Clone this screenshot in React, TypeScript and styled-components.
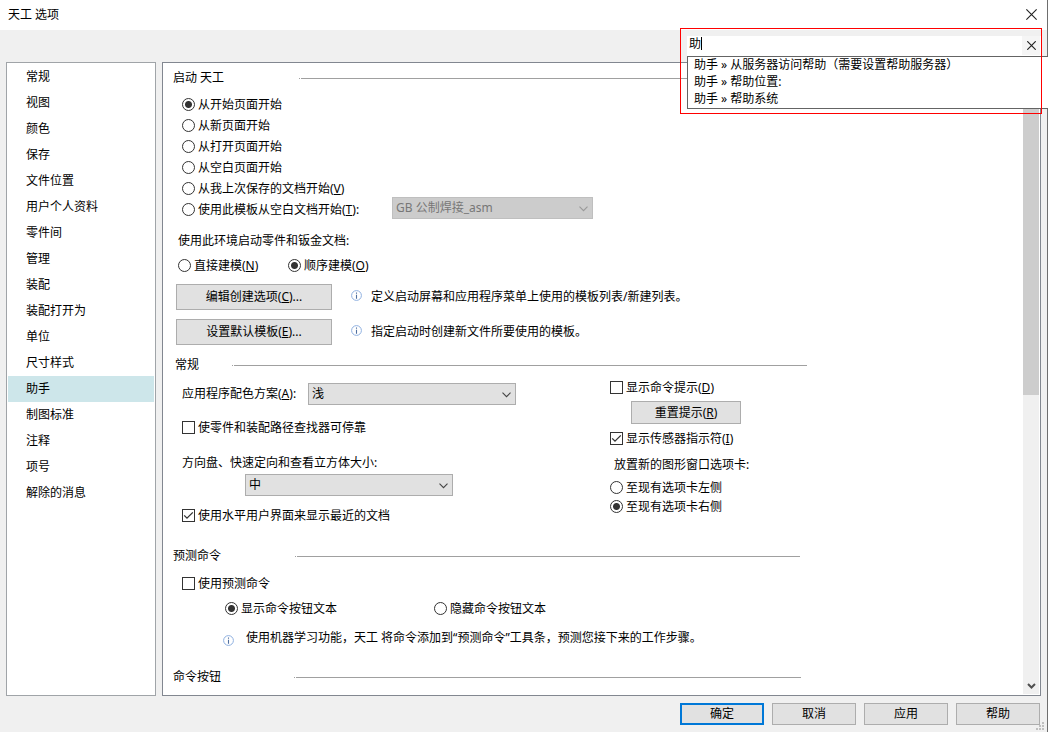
import React, { useId, useState } from "react";
import styled, { createGlobalStyle, css } from "styled-components";

const GlobalStyle = createGlobalStyle`
  * { box-sizing: border-box; }
  body {
    margin: 0;
    background: #f0f0f0;
    color: #000;
    font: 12px/20px "Noto Sans", "Noto Sans CJK SC", sans-serif;
  }
  button, input, select { font: inherit; color: inherit; }
  u { text-underline-offset: 1px; text-decoration-thickness: 1px; text-decoration-skip-ink: none; }
`;

const Window = styled.div`
  position: relative;
  display: flex;
  flex-direction: column;
  min-height: 100vh;
  border-right: 1px solid #6e6e6e;
`;

const TitleBar = styled.header`
  display: flex;
  align-items: center;
  justify-content: space-between;
  height: 30px;
  padding: 0 10px 2px 8px;
  background: #fff;
`;

const Title = styled.h1`
  margin: 0;
  padding-top: 2px;
  font-size: 12px;
  font-weight: 400;
`;

const IconButton = styled.button`
  display: flex;
  align-items: center;
  justify-content: center;
  padding: 0;
  border: 0;
  background: transparent;
`;

const SearchPopup = styled.div`
  position: absolute;
  top: 28px;
  right: 5px;
  width: 362px;
  height: 86px;
  padding: 8px 1px 0 7px;

  &::after {
    content: "";
    position: absolute;
    inset: 0;
    border: 1px solid #ff0000;
    pointer-events: none;
  }
`;

const SearchField = styled.div`
  position: relative;
  display: flex;
  height: 20px;
  padding-right: 1px;
  background: #fff;
`;

const SearchInput = styled.input`
  flex: 1;
  min-width: 0;
  height: 15px;
  padding: 0 2px;
  border: 0;
  outline: 0;
  background: transparent;
  caret-color: transparent;
  line-height: 15px;
`;

const Caret = styled.span`
  position: absolute;
  top: 1px;
  left: 14px;
  width: 1px;
  height: 13px;
  background: #000;
`;

const ClearButton = styled(IconButton)`
  width: 18px;
  height: 19px;
  background: #f5f5f5;
`;

const Suggestions = styled.ul`
  position: relative;
  display: grid;
  grid-auto-rows: 17px;
  margin: 0 -7px 0 0;
  padding: 0 6px;
  height: 53px;
  border: 1px solid #646464;
  border-right: 0;
  background: #fff;
  list-style: none;
  line-height: 15px;
`;

const Body = styled.div`
  display: flex;
  flex: 1;
  gap: 6px;
  padding: 32px 6px 0;
`;

const Sidebar = styled.nav`
  width: 150px;
  border: 1px solid #a0a4a8;
  background: #fff;
`;

const NavList = styled.ul`
  margin: 0;
  padding: 1px;
  list-style: none;
`;

const NavItem = styled.button<{ $active: boolean }>`
  display: block;
  width: 100%;
  height: 26px;
  padding: 0 18px;
  border: 0;
  background: ${(p) => (p.$active ? "#cde6ea" : "transparent")};
  text-align: left;
`;

const Panel = styled.main`
  display: flex;
  flex: 1;
  min-width: 0;
  padding-right: 1px;
  border: 1px solid #828790;
  background: #fff;
`;

const Content = styled.div`
  flex: 1;
  min-width: 0;
  padding: 5px 10px 7px;
`;

const ScrollTrack = styled.div`
  display: flex;
  flex-direction: column;
  width: 16px;
  margin-bottom: 1px;
  background: #f0f0f0;
`;

const ScrollThumb = styled.div`
  height: 315px;
  margin-bottom: auto;
  background: #cdcdcd;
`;

const ScrollButton = styled(IconButton)`
  height: 17px;
`;

const Group = styled.section<{ $top?: number; $width: number }>`
  max-width: ${(p) => p.$width}px;
  margin-top: ${(p) => p.$top ?? 0}px;
`;

const GroupHeader = styled.div<{ $label: number; $indent?: number }>`
  display: grid;
  grid-template-columns: ${(p) => p.$label}px 1fr;
  align-items: center;
  height: 20px;
  padding-left: ${(p) => p.$indent ?? 0}px;

  &::after {
    content: "";
    height: 1px;
    background: linear-gradient(to right, #a0a0a0 1px, #fff 1px 2px, #a0a0a0 2px);
  }
`;

const GroupTitle = styled.h2`
  margin: 0;
  font-size: 12px;
  font-weight: 400;
`;

const Row = styled.div<{ $top?: number; $indent?: number; $gap?: number }>`
  display: flex;
  align-items: center;
  gap: ${(p) => p.$gap ?? 0}px;
  min-height: 20px;
  margin-top: ${(p) => p.$top ?? 0}px;
  padding-left: ${(p) => p.$indent ?? 0}px;
  white-space: nowrap;
`;

const ChoiceRow = styled(Row)`
  min-height: 21px;
`;

const RadioList = styled.div<{ $row: number; $top: number; $indent?: number }>`
  display: grid;
  grid-auto-rows: ${(p) => p.$row}px;
  margin-top: ${(p) => p.$top}px;
  padding-left: ${(p) => p.$indent ?? 0}px;
`;

const TemplateRow = styled.div`
  display: flex;
  height: 25px;
  margin-top: -2px;
  padding-left: 9px;
`;

const TemplateLabel = styled.div`
  display: flex;
  align-items: center;
  width: 210px;
`;

const ChoiceLabel = styled.label`
  display: inline-flex;
  align-items: center;
  gap: 3px;
  white-space: nowrap;
`;

const choiceBox = css`
  appearance: none;
  flex: none;
  width: 13px;
  height: 13px;
  margin: 0;
  border: 1px solid #333;
  background: #fff;
`;

const RadioInput = styled.input`
  ${choiceBox}
  border-radius: 50%;
  &:checked { background: radial-gradient(circle, #333 3px, #fff 4px); }
`;

const CheckInput = styled.input`
  ${choiceBox}
`;

const CheckBoxFrame = styled.span`
  position: relative;
  display: flex;

  svg {
    position: absolute;
    inset: 0;
    pointer-events: none;
  }
`;

const PairCell = styled.div<{ $width: number }>`
  display: flex;
  width: ${(p) => p.$width}px;
`;

const PushButton = styled.button<{ $width: number; $height: number; $primary?: boolean }>`
  width: ${(p) => p.$width}px;
  height: ${(p) => p.$height}px;
  padding: 0;
  border: ${(p) => (p.$primary ? "2px solid #0078d7" : "1px solid #adadad")};
  background: #e1e1e1;
  line-height: 16px;
`;

const SelectFrame = styled.div<{ $width: number }>`
  position: relative;
  width: ${(p) => p.$width}px;
  height: 22px;

  svg {
    position: absolute;
    top: 9px;
    right: 5px;
    pointer-events: none;
  }
`;

const SelectBox = styled.select`
  appearance: none;
  width: 100%;
  height: 22px;
  padding: 0 20px 0 3px;
  border: 1px solid #adadad;
  border-radius: 0;
  background: #e1e1e1;
  line-height: 20px;

  &:disabled {
    border-color: #bfbfbf;
    background: #ccc;
    color: #777;
    opacity: 1;
  }
`;

const Columns = styled.div`
  display: grid;
  grid-template-columns: 437px 1fr;
  margin-top: 2px;
`;

const LeftColumn = styled.div`
  padding: 6px 0 0 9px;
`;

const RightColumn = styled.div``;

const ActionRow = styled(Row)`
  height: 26px;
  padding-left: 3px;
`;

const Hint = styled.div<{ $gap?: number; $lead?: number }>`
  display: flex;
  align-items: flex-start;
  gap: ${(p) => p.$gap ?? 9}px;

  svg {
    flex: none;
    margin-top: ${(p) => p.$lead ?? 3}px;
  }
`;

const Footer = styled.footer`
  display: flex;
  justify-content: flex-end;
  gap: 8px;
  padding: 7px;
`;

const Grip = styled.svg`
  position: absolute;
  right: 3px;
  bottom: 2px;
`;

const CrossIcon = ({ size, stroke = 1 }: { size: number; stroke?: number }) => (
  <svg width={size} height={size} viewBox="0 0 10 10" fill="none" stroke="#222" strokeWidth={stroke}>
    <path d="M0.3 0.3L9.7 9.7M9.7 0.3L0.3 9.7" />
  </svg>
);

const InfoIcon = () => (
  <svg width="11" height="11" viewBox="0 0 11 11" fill="none">
    <circle cx="5.5" cy="5.5" r="4.9" stroke="#8fb0e0" />
    <path d="M5.5 2.5v1.2M5.5 4.7v4" stroke="#4f6f9f" strokeWidth="1.1" />
  </svg>
);

const Radio = ({ name, checked, children }: { name: string; checked?: boolean; children: React.ReactNode }) => (
  <ChoiceLabel>
    <RadioInput type="radio" name={name} defaultChecked={checked} />
    <span>{children}</span>
  </ChoiceLabel>
);

const Check = ({ initial = false, children }: { initial?: boolean; children: React.ReactNode }) => {
  const [on, setOn] = useState(initial);
  return (
    <ChoiceLabel>
      <CheckBoxFrame>
        <CheckInput type="checkbox" checked={on} onChange={(e) => setOn(e.target.checked)} />
        {on && (
          <svg width="13" height="13" viewBox="0 0 13 13" fill="none" stroke="#333" strokeWidth="1.3">
            <path d="M2.2 6.4L5 9.2L10.8 3.4" />
          </svg>
        )}
      </CheckBoxFrame>
      <span>{children}</span>
    </ChoiceLabel>
  );
};

const Select = ({ id, width, value, label, disabled }: { id: string; width: number; value: string; label?: string; disabled?: boolean }) => (
  <SelectFrame $width={width}>
    <SelectBox id={id} aria-label={label} disabled={disabled} defaultValue={value}>
      <option>{value}</option>
    </SelectBox>
    <svg width="9" height="6" viewBox="0 0 9 6" fill="none" stroke={disabled ? "#999" : "#444"} strokeWidth="1.1">
      <path d="M0.5 0.7L4.5 4.7L8.5 0.7" />
    </svg>
  </SelectFrame>
);

const pages = [
  "常规", "视图", "颜色", "保存", "文件位置", "用户个人资料", "零件间", "管理", "装配",
  "装配打开为", "单位", "尺寸样式", "助手", "制图标准", "注释", "项号", "解除的消息",
];

const results = ["助手 » 从服务器访问帮助（需要设置帮助服务器）", "助手 » 帮助位置:", "助手 » 帮助系统"];

export default function App() {
  const [page, setPage] = useState("助手");
  const [query, setQuery] = useState("助");
  const schemeId = useId();
  const sizeId = useId();

  return (
    <>
      <GlobalStyle />
      <Window>
        <TitleBar>
          <Title>天工 选项</Title>
          <IconButton aria-label="关闭">
            <CrossIcon size={11} />
          </IconButton>
        </TitleBar>

        <Body>
          <Sidebar>
            <NavList>
              {pages.map((p) => (
                <li key={p}>
                  <NavItem $active={p === page} onClick={() => setPage(p)}>{p}</NavItem>
                </li>
              ))}
            </NavList>
          </Sidebar>

          <Panel>
            <Content>
              <Group $width={634}>
                <GroupHeader $label={126}><GroupTitle>启动 天工</GroupTitle></GroupHeader>
                <RadioList $row={21} $top={6} $indent={9}>
                  <Radio name="start" checked>从开始页面开始</Radio>
                  <Radio name="start">从新页面开始</Radio>
                  <Radio name="start">从打开页面开始</Radio>
                  <Radio name="start">从空白页面开始</Radio>
                  <Radio name="start">从我上次保存的文档开始(<u>V</u>)</Radio>
                </RadioList>
                <TemplateRow>
                  <TemplateLabel>
                    <Radio name="start">使用此模板从空白文档开始(<u>T</u>):</Radio>
                  </TemplateLabel>
                  <Select id="template" label="模板" width={201} value="GB 公制焊接_asm" disabled />
                </TemplateRow>
                <Row $top={9} $indent={5}>使用此环境启动零件和钣金文档:</Row>
                <ChoiceRow $top={4} $indent={5}>
                  <PairCell $width={110}><Radio name="env">直接建模(<u>N</u>)</Radio></PairCell>
                  <Radio name="env" checked>顺序建模(<u>O</u>)</Radio>
                </ChoiceRow>
                <ActionRow $top={8} $gap={19}>
                  <PushButton $width={156} $height={26}>编辑创建选项(<u>C</u>)...</PushButton>
                  <Hint><InfoIcon />定义启动屏幕和应用程序菜单上使用的模板列表/新建列表。</Hint>
                </ActionRow>
                <ActionRow $top={9} $gap={19}>
                  <PushButton $width={156} $height={26}>设置默认模板(<u>E</u>)...</PushButton>
                  <Hint><InfoIcon />指定启动时创建新文件所要使用的模板。</Hint>
                </ActionRow>
              </Group>

              <Group $top={10} $width={634}>
                <GroupHeader $label={57} $indent={2}><GroupTitle>常规</GroupTitle></GroupHeader>
                <Columns>
                  <LeftColumn>
                    <Row>
                      <PairCell $width={126} as="label" htmlFor={schemeId}>应用程序配色方案(<u>A</u>):</PairCell>
                      <Select id={schemeId} width={208} value="浅" />
                    </Row>
                    <ChoiceRow $top={12}><Check>使零件和装配路径查找器可停靠</Check></ChoiceRow>
                    <Row $top={15}><label htmlFor={sizeId}>方向盘、快速定向和查看立方体大小:</label></Row>
                    <Row $top={1} $indent={63}><Select id={sizeId} width={208} value="中" /></Row>
                    <ChoiceRow $top={9}><Check initial>使用水平用户界面来显示最近的文档</Check></ChoiceRow>
                  </LeftColumn>
                  <RightColumn>
                    <ChoiceRow><Check>显示命令提示(<u>D</u>)</Check></ChoiceRow>
                    <Row $top={3} $indent={21}><PushButton $width={110} $height={23}>重置提示(<u>R</u>)</PushButton></Row>
                    <ChoiceRow $top={4}><Check initial>显示传感器指示符(<u>I</u>)</Check></ChoiceRow>
                    <Row $top={6} $indent={4}>放置新的图形窗口选项卡:</Row>
                    <RadioList $row={19} $top={3}>
                      <Radio name="tab">至现有选项卡左侧</Radio>
                      <Radio name="tab" checked>至现有选项卡右侧</Radio>
                    </RadioList>
                  </RightColumn>
                </Columns>
              </Group>

              <Group $top={20} $width={627}>
                <GroupHeader $label={122}><GroupTitle>预测命令</GroupTitle></GroupHeader>
                <ChoiceRow $top={7} $indent={9}><Check>使用预测命令</Check></ChoiceRow>
                <ChoiceRow $top={4} $indent={52}>
                  <PairCell $width={209}><Radio name="predict" checked>显示命令按钮文本</Radio></PairCell>
                  <Radio name="predict">隐藏命令按钮文本</Radio>
                </ChoiceRow>
                <Row $top={9} $indent={50}>
                  <Hint $gap={12} $lead={7}>
                    <InfoIcon />
                    使用机器学习功能，天工 将命令添加到“预测命令”工具条，预测您接下来的工作步骤。
                  </Hint>
                </Row>
              </Group>

              <Group $top={19} $width={628}>
                <GroupHeader $label={121}><GroupTitle>命令按钮</GroupTitle></GroupHeader>
              </Group>
            </Content>

            <ScrollTrack>
              <ScrollButton aria-label="向上滚动">
                <svg width="9" height="6" viewBox="0 0 9 6" fill="none" stroke="#505050" strokeWidth="2">
                  <path d="M1 5L4.5 1.5L8 5" />
                </svg>
              </ScrollButton>
              <ScrollThumb />
              <ScrollButton aria-label="向下滚动">
                <svg width="9" height="6" viewBox="0 0 9 6" fill="none" stroke="#505050" strokeWidth="2">
                  <path d="M1 1L4.5 4.5L8 1" />
                </svg>
              </ScrollButton>
            </ScrollTrack>
          </Panel>
        </Body>

        <Footer>
          <PushButton $width={84} $height={22} $primary>确定</PushButton>
          <PushButton $width={84} $height={22}>取消</PushButton>
          <PushButton $width={84} $height={22}>应用</PushButton>
          <PushButton $width={84} $height={22}>帮助</PushButton>
        </Footer>

        <SearchPopup>
          <SearchField>
            <SearchInput
              aria-label="搜索选项"
              value={query}
              onChange={(e) => setQuery(e.target.value)}
            />
            <Caret />
            <ClearButton aria-label="清除" onClick={() => setQuery("")}>
              <CrossIcon size={9} stroke={1.3} />
            </ClearButton>
          </SearchField>
          <Suggestions>
            {results.map((r) => <li key={r}>{r}</li>)}
          </Suggestions>
        </SearchPopup>

        <Grip width="8" height="8" viewBox="0 0 8 8" fill="#bfbfbf">
          <path d="M6 0h2v2H6zM3 3h2v2H3zM6 3h2v2H6zM0 6h2v2H0zM3 6h2v2H3zM6 6h2v2H6z" />
        </Grip>
      </Window>
    </>
  );
}
